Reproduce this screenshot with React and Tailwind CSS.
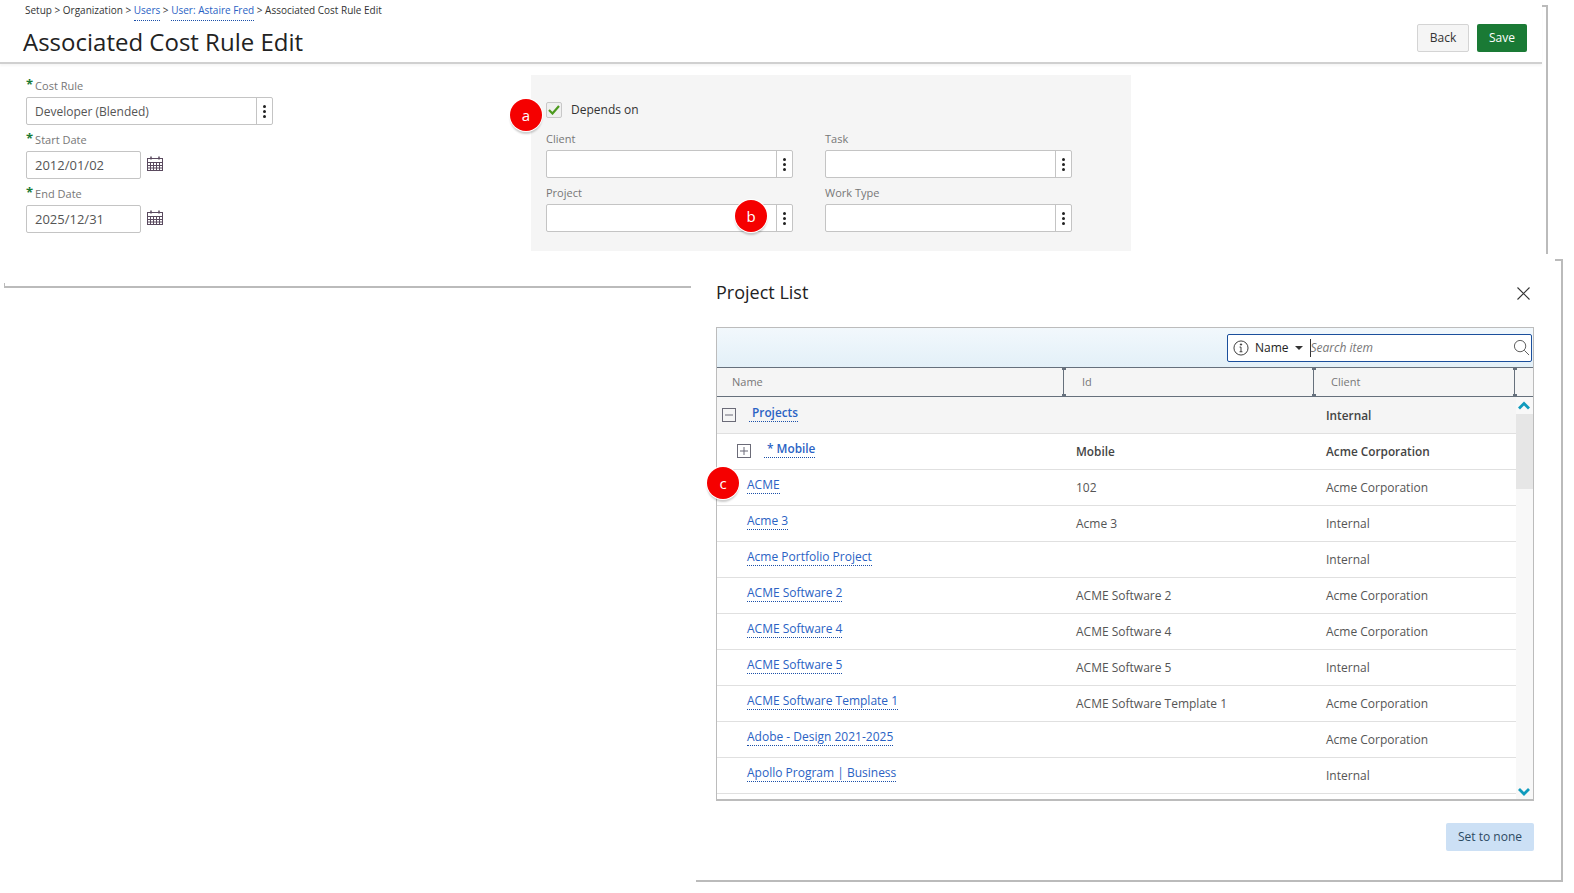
const rows = [
  ["ACME", "102", "Acme Corporation"],
  ["Acme 3", "Acme 3", "Internal"],
  ["Acme Portfolio Project", "", "Internal"],
  ["ACME Software 2", "ACME Software 2", "Acme Corporation"],
  ["ACME Software 4", "ACME Software 4", "Acme Corporation"],
  ["ACME Software 5", "ACME Software 5", "Internal"],
  ["ACME Software Template 1", "ACME Software Template 1", "Acme Corporation"],
  ["Adobe - Design 2021-2025", "", "Acme Corporation"],
  ["Apollo Program | Business", "", "Internal"],
]

function Dots() {
  return (
    <div className="w-4 shrink-0 flex flex-col items-center justify-center gap-[2px] border-l border-[#c4c4c4]">
      <span className="w-[3px] h-[3px] rounded-full bg-[#222]"></span>
      <span className="w-[3px] h-[3px] rounded-full bg-[#222]"></span>
      <span className="w-[3px] h-[3px] rounded-full bg-[#222]"></span>
    </div>
  )
}

function Lookup({ value }) {
  return (
    <div className="w-[247px] h-7 flex bg-white border border-[#c4c4c4] rounded-[2px]">
      <div className="flex-1 pl-2 text-[12px] leading-[27px] text-[#555]">{value}</div>
      <Dots />
    </div>
  )
}

function Label({ text, required }) {
  return (
    <div className="h-[26px] pt-[4px] flex items-center text-[11px] text-[#777]">
      {required && <span className="text-[#1a7a35] font-bold text-[13px] mr-[2px] -mt-[2px]">*</span>}
      {text}
    </div>
  )
}

function Calendar() {
  return (
    <svg width="16" height="15" viewBox="0 0 16 15" className="ml-[6px] -mt-[3px]" fill="none" stroke="#5a4a5f" strokeWidth="1">
      <rect x="0.5" y="2.5" width="15" height="12" />
      <path d="M0.5 6.5h15M0.5 9.5h15M0.5 12h15M3.5 6.5v8M6.5 6.5v8M9.5 6.5v8M12.5 6.5v8" />
      <path d="M4 0.5v3M12 0.5v3" strokeWidth="1.5" />
    </svg>
  )
}

function DateField({ label, value }) {
  return (
    <div>
      <Label text={label} required />
      <div className="flex items-center">
        <div className="w-[115px] h-7 pl-2 text-[13px] leading-[27px] text-[#555] border border-[#c4c4c4] rounded-[2px]">{value}</div>
        <Calendar />
      </div>
    </div>
  )
}

function Badge({ letter, className }) {
  return (
    <div className={`absolute w-8 h-8 rounded-full bg-[#f50000] text-white text-[15px] flex items-center justify-center shadow-[0_0_0_1px_#fff,0_3px_2px_rgba(0,0,0,0.2)] ${className}`}>
      {letter}
    </div>
  )
}

function LinkText({ children, bold }) {
  return (
    <a className={`inline-block leading-[17px] text-[#2a62c4] border-b border-dotted border-[#1b4fa8] ${bold ? "text-[11.8px] font-semibold" : "text-[12px]"}`}>
      {children}
    </a>
  )
}

function ToggleBox({ minus }) {
  return (
    <svg width="14" height="14" viewBox="0 0 14 14" fill="none" stroke="#6b6b78" strokeWidth="1" className="shrink-0">
      <rect x="0.5" y="0.5" width="13" height="13" />
      <path d="M3 7h8" />
      {!minus && <path d="M7 3v8" />}
    </svg>
  )
}

function ColumnHeader({ label, width, pad }) {
  return (
    <div className={`${width} ${pad} relative h-full flex items-center text-[11px] text-[#777]`}>
      {label}
      <div className="absolute right-0 top-0 bottom-0 w-[1px] bg-[#66707c]">
        <span className="absolute -left-[1.5px] top-0 w-1 h-[2px] bg-[#66707c]"></span>
        <span className="absolute -left-[1.5px] bottom-0 w-1 h-[2px] bg-[#66707c]"></span>
      </div>
    </div>
  )
}

function Row({ name, id, client }) {
  return (
    <div className="h-9 flex border-b border-[#e0e0e0] text-[12px] text-[#555] shrink-0">
      <div className="w-[347px] pl-[30px] pt-[6px]"><LinkText>{name}</LinkText></div>
      <div className="w-[250px] pl-[12px] pt-[9px] leading-[17px]">{id}</div>
      <div className="flex-1 pl-[12px] pt-[9px] leading-[17px]">{client}</div>
    </div>
  )
}

export default function App() {
  return (
    <div className="relative w-[1574px] h-[893px] overflow-hidden bg-white font-['Open_Sans',sans-serif] text-[#222]">
      {/* window edge of the page behind */}
      <div className="absolute left-[1542px] top-[5px] w-[6px] h-[249px] border-t-2 border-r-2 border-[#bbb]"></div>

      <header className="w-[1542px] h-[64px] pl-[25px] pr-[15px] flex justify-between border-b-2 border-[#d0d0d0] shadow-[0_2px_2px_rgba(0,0,0,0.04)]">
        <div>
          <div className="pt-[3px] text-[10px] leading-[15px] text-[#333]">
            Setup &gt; Organization &gt; <a className="text-[#2a62c4] border-b border-dotted border-[#1b4fa8] pb-[3px]">Users</a> &gt; <a className="text-[#2a62c4] border-b border-dotted border-[#1b4fa8] pb-[3px]">User: Astaire Fred</a> &gt; Associated Cost Rule Edit
          </div>
          <h1 className="-ml-[2px] mt-[6px] text-[24px] leading-[36px] text-[#222]">Associated Cost Rule Edit</h1>
        </div>
        <div className="flex gap-2 pt-6">
          <button className="w-[52px] h-7 bg-[#f5f5f5] border border-[#d4d4d4] rounded-[2px] text-[12px] text-[#333]">Back</button>
          <button className="w-[50px] h-7 bg-[#1a7a35] rounded-[2px] text-[12px] text-white">Save</button>
        </div>
      </header>

      <div className="flex pl-[26px] pt-[7px]">
        <div className="w-[505px]">
          <Label text="Cost Rule" required />
          <Lookup value="Developer (Blended)" />
          <DateField label="Start Date" value="2012/01/02" />
          <DateField label="End Date" value="2025/12/31" />
        </div>

        <div className="relative w-[600px] h-[176px] mt-1 bg-[#f5f5f5] pl-[15px] pt-[27px]">
          <div className="flex items-center h-4 gap-[9px] text-[12px] text-[#333]">
            <div className="w-4 h-4 bg-[#f0f0f0] border border-[#c8c8c8] rounded-[2px] flex items-center justify-center">
              <svg width="12" height="10" viewBox="0 0 12 10" fill="none" stroke="#4c9a1e" strokeWidth="2.2">
                <path d="M1 5l3.5 3.5L11 1" />
              </svg>
            </div>
            Depends on
          </div>
          <div className="grid grid-cols-[247px_247px] gap-x-8 mt-[6px]">
            <div><Label text="Client" /><Lookup value="" /></div>
            <div><Label text="Task" /><Lookup value="" /></div>
            <div><Label text="Project" /><Lookup value="" /></div>
            <div><Label text="Work Type" /><Lookup value="" /></div>
          </div>
          <Badge letter="a" className="left-[-21px] top-[24px]" />
          <Badge letter="b" className="left-[204px] top-[125px]" />
        </div>
      </div>

      {/* edge of the panel behind the dialog */}
      <div className="ml-[4px] mt-[32px] w-[687px] h-[5px] border-l border-b-2 border-[#bbb]"></div>

      {/* dialog */}
      <section className="absolute left-[696px] top-[259px] w-[867px] h-[623px] bg-white border-r-2 border-b-2 border-[#bbb] pl-5 pr-[27px]">
        <div className="absolute right-0 top-0 w-[6px] border-t-2 border-[#bbb]"></div>
        <div className="h-[68px] flex items-start justify-between pt-[20px]">
          <h2 className="text-[18px] leading-[26px] text-[#222]">Project List</h2>
          <svg width="13" height="13" viewBox="0 0 13 13" className="mt-[8px] mr-[4px]" fill="none" stroke="#333" strokeWidth="1.1">
            <path d="M0.5 0.5l12 12M12.5 0.5l-12 12" />
          </svg>
        </div>

        <div className="h-[474px] flex flex-col border border-[#bcbcbc] border-b-2">
          <div className="h-[40px] shrink-0 flex items-center justify-end pr-[1px] bg-gradient-to-b from-[#f2f8fc] to-[#e3f0f8] border-b border-[#66707c]">
            <div className="w-[305px] h-7 flex items-center bg-white border border-[#1b4f9c] rounded-[2px] pl-[5px] pr-[1px]">
              <svg width="16" height="16" viewBox="0 0 17 17" fill="none" stroke="#333" strokeWidth="1" className="shrink-0">
                <circle cx="8.5" cy="8.5" r="7.5" />
                <path d="M8.5 7.5v5M7 12.5h3M7 7.5h1.5" />
                <circle cx="8.5" cy="4.8" r="0.7" fill="#333" />
              </svg>
              <span className="ml-[6px] pt-[1px] text-[12px] font-medium text-[#222]">Name</span>
              <span className="ml-[6px] w-0 h-0 border-x-[4px] border-x-transparent border-t-[4px] border-t-[#333]"></span>
              <span className="ml-[7px] w-[1px] h-[18px] bg-[#333]"></span>
              <span className="flex-1 pt-[1px] text-[12px] italic text-[#777]">Search item</span>
              <svg width="17" height="17" viewBox="0 0 18 18" fill="none" stroke="#555" strokeWidth="1" className="shrink-0">
                <circle cx="7.5" cy="7.5" r="6" />
                <path d="M12 12l5 5" />
              </svg>
            </div>
          </div>

          <div className="h-[29px] shrink-0 flex bg-[#f5f5f5] border-b border-[#66707c]">
            <ColumnHeader label="Name" width="w-[347px]" pad="pl-[15px]" />
            <ColumnHeader label="Id" width="w-[250px]" pad="pl-[18px]" />
            <ColumnHeader label="Client" width="w-[201px]" pad="pl-[17px]" />
          </div>

          <div className="flex-1 flex min-h-0">
            <div className="w-[799px] flex flex-col overflow-hidden">
              <div className="h-[37px] flex items-start border-b border-[#e0e0e0] bg-[#f5f5f5] text-[11.8px] font-semibold text-[#444] shrink-0">
                <div className="w-[347px] flex pl-[5px] pt-[11px]">
                  <ToggleBox minus />
                  <div className="ml-[13px] -mt-[4px] w-fit"><LinkText bold>&nbsp;Projects</LinkText></div>
                </div>
                <div className="w-[250px]"></div>
                <div className="pl-[12px] pt-[10px] leading-[17px]">Internal</div>
              </div>
              <div className="h-9 flex items-start border-b border-[#e0e0e0] text-[11.8px] font-semibold text-[#444] shrink-0">
                <div className="w-[347px] flex pl-[20px] pt-[10px]">
                  <ToggleBox />
                  <div className="ml-[13px] -mt-[4px] w-fit"><LinkText bold>&nbsp;* Mobile</LinkText></div>
                </div>
                <div className="w-[250px] pl-[12px] pt-[9px] leading-[17px]">Mobile</div>
                <div className="pl-[12px] pt-[9px] leading-[17px]">Acme Corporation</div>
              </div>
              {rows.map((r) => (
                <Row key={r[0]} name={r[0]} id={r[1]} client={r[2]} />
              ))}
            </div>
            <div className="flex-1 flex flex-col bg-[#f8f8f8]">
              <svg width="16" height="17" viewBox="0 0 16 17" fill="none" stroke="#0f9bbd" strokeWidth="2.8" className="shrink-0">
                <path d="M3 11.5l5-5 5 5" />
              </svg>
              <div className="h-[75px] bg-[#e6e6e6]"></div>
              <div className="flex-1"></div>
              <svg width="16" height="16" viewBox="0 0 16 16" fill="none" stroke="#0f9bbd" strokeWidth="2.8" className="shrink-0">
                <path d="M3 6l5 5 5-5" />
              </svg>
            </div>
          </div>
        </div>

        <div className="flex justify-end pt-[22px]">
          <button className="w-[88px] h-7 bg-[#cce0f5] rounded-[2px] text-[12px] text-[#2c4a63]">Set to none</button>
        </div>

        <Badge letter="c" className="left-[11px] top-[208px] text-[13px]" />
      </section>
    </div>
  )
}
